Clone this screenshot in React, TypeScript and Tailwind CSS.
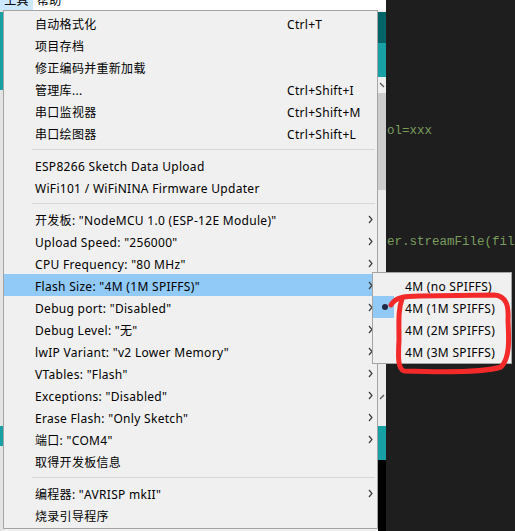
import React from 'react';

type MenuItem = { label: string; shortcut?: string; sub?: boolean; active?: boolean } | 'sep';

const toolsMenu: MenuItem[] = [
  { label: '自动格式化', shortcut: 'Ctrl+T' },
  { label: '项目存档' },
  { label: '修正编码并重新加载' },
  { label: '管理库...', shortcut: 'Ctrl+Shift+I' },
  { label: '串口监视器', shortcut: 'Ctrl+Shift+M' },
  { label: '串口绘图器', shortcut: 'Ctrl+Shift+L' },
  'sep',
  { label: 'ESP8266 Sketch Data Upload' },
  { label: 'WiFi101 / WiFiNINA Firmware Updater' },
  'sep',
  { label: '开发板: "NodeMCU 1.0 (ESP-12E Module)"', sub: true },
  { label: 'Upload Speed: "256000"', sub: true },
  { label: 'CPU Frequency: "80 MHz"', sub: true },
  { label: 'Flash Size: "4M (1M SPIFFS)"', sub: true, active: true },
  { label: 'Debug port: "Disabled"', sub: true },
  { label: 'Debug Level: "无"', sub: true },
  { label: 'lwIP Variant: "v2 Lower Memory"', sub: true },
  { label: 'VTables: "Flash"', sub: true },
  { label: 'Exceptions: "Disabled"', sub: true },
  { label: 'Erase Flash: "Only Sketch"', sub: true },
  { label: '端口: "COM4"', sub: true },
  { label: '取得开发板信息' },
  'sep',
  { label: '编程器: "AVRISP mkII"', sub: true },
  { label: '烧录引导程序' },
];

const flashSizes = ['4M (no SPIFFS)', '4M (1M SPIFFS)', '4M (2M SPIFFS)', '4M (3M SPIFFS)'];

const Chevron = () => (
  <svg width="5" height="9" viewBox="0 0 5 9" className="shrink-0">
    <path d="M1 1 L4 4.5 L1 8" fill="none" stroke="#3c3c3c" strokeWidth="1.2" />
  </svg>
);

export default function App() {
  return (
    <div className="relative w-[515px] h-[531px] overflow-hidden bg-[#1e1e1e] font-['Noto_Sans','Noto_Sans_CJK_SC',sans-serif] text-[12px] tracking-[0.3px] text-black">
      <div className="flex h-full">
        {/* IDE window behind the menu */}
        <div className="flex w-[386px] flex-col">
          <div className="flex h-[10px] items-center overflow-hidden bg-white">
            <div className="-mt-[9px] flex h-[19px] w-[33px] items-center justify-center bg-[#cce8ff]">工具</div>
            <div className="-mt-[9px] ml-[4px]">帮助</div>
          </div>
          <div className="flex flex-1">
            <div className="flex w-[3px] flex-col">
              <div className="h-[2px] bg-[#e0e0e0]" />
              <div className="h-[78px] bg-[#17a1a5]" />
              <div className="h-[336px] bg-[#e4e4e4]" />
              <div className="h-[20px] bg-[#17a1a5]" />
              <div className="flex-1 bg-[#e4e4e4]" />
            </div>
            <div className="flex-1 bg-[#f0f0f0]" />
            <div className="flex w-[8px] flex-col">
              <div className="h-[2px] bg-[#f0f0f0]" />
              <div className="h-[31px] bg-[#006468]" />
              <div className="h-[34px] bg-[#17a1a5]" />
              <div className="flex h-[16px] items-center justify-center bg-[#f0f0f0]">
                <svg width="6" height="6" viewBox="0 0 6 6">
                  <path d="M1 1 L5 5" stroke="#555" strokeWidth="1.2" />
                </svg>
              </div>
              <div className="h-[97px] bg-[#cdcdcd]" />
              <div className="flex h-[236px] flex-col items-center bg-[#ececec]">
                <svg width="6" height="6" viewBox="0 0 6 6" className="mt-[204px]">
                  <path d="M5 1 L1 5" stroke="#555" strokeWidth="1.2" />
                </svg>
              </div>
              <div className="h-[34px] bg-[#17a1a5]" />
              <div className="flex-1 bg-black" />
            </div>
          </div>
        </div>
        <div className="flex-1 overflow-hidden whitespace-pre pl-[1px] font-['Liberation_Mono',monospace] text-[12.5px] leading-[16px] tracking-normal text-[#7a9d5e]">
          <div className="mt-[123px]">ol=xxx</div>
          <div className="mt-[95px]">er.streamFile(file, contentType);</div>
        </div>
      </div>

      {/* 工具 menu */}
      <div className="absolute left-[3px] top-[10px] w-[375px] border border-[#a4a4a4] bg-[#f0f0f0] pb-[2px] pt-[1px]">
        {toolsMenu.map((item, i) =>
          item === 'sep' ? (
            <div key={i} className="flex h-[10px] items-center pl-[28px] pr-[2px]">
              <div className="h-px w-full bg-[#d7d7d7]" />
            </div>
          ) : (
            <div
              key={i}
              className={`flex h-[22px] items-center pl-[31px] pr-[4px] pt-[3px] ${item.active ? 'bg-[#91c9f7]' : ''}`}
            >
              <span className="w-[252px] whitespace-nowrap">{item.label}</span>
              {item.shortcut && <span className="whitespace-nowrap">{item.shortcut}</span>}
              <span className="ml-auto flex -mt-[2px]">{item.sub && <Chevron />}</span>
            </div>
          )
        )}
      </div>

      {/* Flash Size submenu */}
      <div className="absolute left-[372px] top-[272px] w-[140px] border border-[#a4a4a4] bg-[#f0f0f0] pb-[1px] pt-[1px]">
        {flashSizes.map((s, i) => (
          <div key={s} className="flex h-[22px] items-center">
            <div className={`flex h-full w-[21px] items-center justify-center ${i === 1 ? 'bg-[#91c9f7]' : ''}`}>
              {i === 1 && <div className="ml-[2px] h-[6px] w-[6px] rounded-full bg-[#1e2a44]" />}
            </div>
            <span className="whitespace-nowrap pl-[11px] pt-[3px]">{s}</span>
          </div>
        ))}
      </div>

      {/* red hand-drawn mark */}
      <svg className="pointer-events-none absolute left-0 top-0" width="515" height="531" viewBox="0 0 515 531">
        <path
          d="M391 305 C395 298 402 296 420 296 L494 295 C506 296 509 305 508 320 C509 340 510 358 501 367 C482 373 432 372 404 371 C398 369 398 358 399 340 C399 322 398 310 402 299"
          fill="none"
          stroke="#f42a2a"
          strokeWidth="5"
          strokeLinecap="round"
          strokeLinejoin="round"
        />
      </svg>
    </div>
  );
}
